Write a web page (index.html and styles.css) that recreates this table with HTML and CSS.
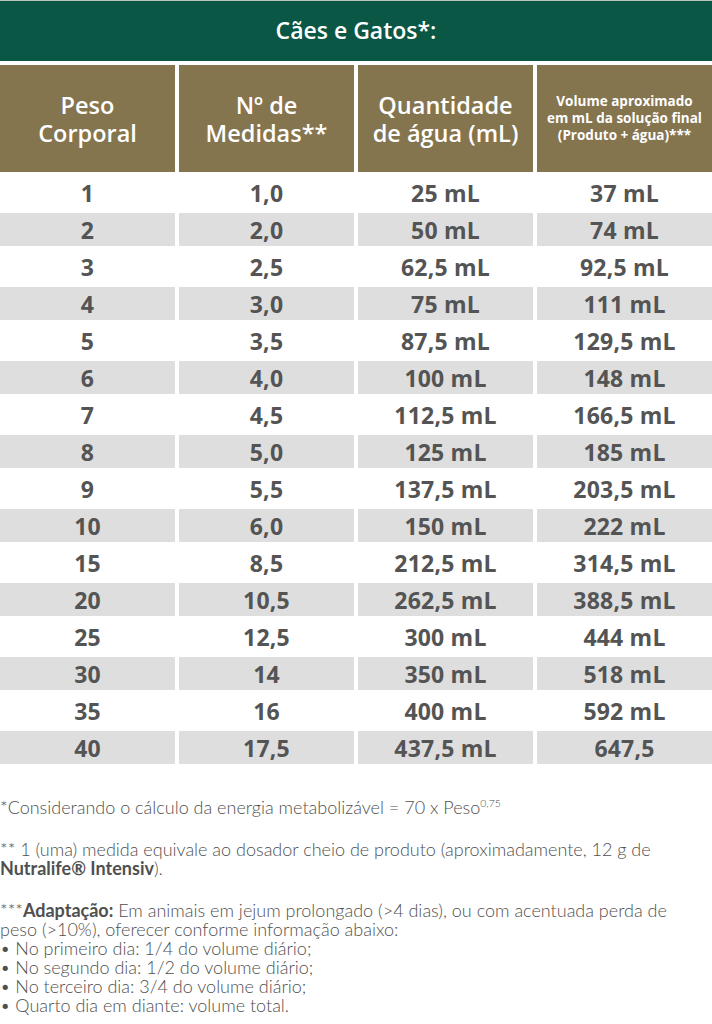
FILE: index.html
```
<!DOCTYPE html>
<html lang="pt-BR">
<head>
<meta charset="utf-8">
<title>Cães e Gatos</title>
<link rel="stylesheet" href="styles.css">
</head>
<body>
<div class="table">
  <div class="title">Cães e Gatos*:</div>
  <div class="th"><span class="ln">Peso</span><span class="ln">Corporal</span></div>
  <div class="th"><span class="ln">Nº de</span><span class="ln">Medidas**</span></div>
  <div class="th"><span class="ln">Quantidade</span><span class="ln">de água (mL)</span></div>
  <div class="th th-small"><span class="ln">Volume aproximado</span><span class="ln">em mL da solução final</span><span class="ln">(Produto + água)***</span></div>

  <div class="td">1</div><div class="td">1,0</div><div class="td">25 mL</div><div class="td">37 mL</div>
  <div class="td alt">2</div><div class="td alt">2,0</div><div class="td alt">50 mL</div><div class="td alt">74 mL</div>
  <div class="td">3</div><div class="td">2,5</div><div class="td">62,5 mL</div><div class="td">92,5 mL</div>
  <div class="td alt">4</div><div class="td alt">3,0</div><div class="td alt">75 mL</div><div class="td alt">111 mL</div>
  <div class="td">5</div><div class="td">3,5</div><div class="td">87,5 mL</div><div class="td">129,5 mL</div>
  <div class="td alt">6</div><div class="td alt">4,0</div><div class="td alt">100 mL</div><div class="td alt">148 mL</div>
  <div class="td">7</div><div class="td">4,5</div><div class="td">112,5 mL</div><div class="td">166,5 mL</div>
  <div class="td alt">8</div><div class="td alt">5,0</div><div class="td alt">125 mL</div><div class="td alt">185 mL</div>
  <div class="td">9</div><div class="td">5,5</div><div class="td">137,5 mL</div><div class="td">203,5 mL</div>
  <div class="td alt">10</div><div class="td alt">6,0</div><div class="td alt">150 mL</div><div class="td alt">222 mL</div>
  <div class="td">15</div><div class="td">8,5</div><div class="td">212,5 mL</div><div class="td">314,5 mL</div>
  <div class="td alt">20</div><div class="td alt">10,5</div><div class="td alt">262,5 mL</div><div class="td alt">388,5 mL</div>
  <div class="td">25</div><div class="td">12,5</div><div class="td">300 mL</div><div class="td">444 mL</div>
  <div class="td alt">30</div><div class="td alt">14</div><div class="td alt">350 mL</div><div class="td alt">518 mL</div>
  <div class="td">35</div><div class="td">16</div><div class="td">400 mL</div><div class="td">592 mL</div>
  <div class="td alt">40</div><div class="td alt">17,5</div><div class="td alt">437,5 mL</div><div class="td alt">647,5</div>
</div>

<div class="notes">
  <p class="note note-1">*Considerando o cálculo da energia metabolizável = 70 x Peso<sup>0,75</sup></p>
  <p class="note note-2">** 1 (uma) medida equivale ao dosador cheio de produto (aproximadamente, 12 g de<br><b>Nutralife® Intensiv</b>).</p>
  <p class="note note-3">***<b>Adaptação:</b> Em animais em jejum prolongado (&gt;4 dias), ou com acentuada perda de<br>peso (&gt;10%), oferecer conforme informação abaixo:<br>• No primeiro dia: 1/4 do volume diário;<br>• No segundo dia: 1/2 do volume diário;<br>• No terceiro dia: 3/4 do volume diário;<br>• Quarto dia em diante: volume total.</p>
</div>
</body>
</html>
```

FILE: styles.css
```
html, body {
  margin: 0;
  padding: 0;
  background: #ffffff;
}

body {
  width: 712px;
  font-family: "Open Sans", "Liberation Sans", sans-serif;
}

.table {
  display: grid;
  grid-template-columns: repeat(4, 1fr);
  column-gap: 4px;
  row-gap: 4px;
}

.title {
  grid-column: 1 / -1;
  height: 61px;
  border-top: 1px solid #b9c6c0;
  box-sizing: border-box;
  background: #0a5745;
  color: #ffffff;
  font-weight: 600;
  font-size: 23px;
  display: flex;
  align-items: center;
  justify-content: center;
  padding-bottom: 3px;
}

.th {
  height: 107px;
  background: #85754f;
  color: #ffffff;
  font-weight: 600;
  font-size: 23.5px;
  display: flex;
  flex-direction: column;
  align-items: center;
  justify-content: center;
  text-align: center;
}

.ln {
  display: block;
  height: 28px;
  line-height: 28px;
}

.th-small {
  font-size: 13.5px;
  font-weight: 700;
}

.th-small .ln {
  height: 17px;
  line-height: 17px;
}

.td {
  height: 33px;
  display: flex;
  align-items: center;
  justify-content: center;
  color: #545454;
  font-weight: 700;
  font-size: 23px;
  letter-spacing: 0.2px;
}

.alt {
  background: #dedede;
}

.notes {
  padding-top: 34px;
  color: #505050;
  font-family: Lato, "Open Sans", sans-serif;
  font-weight: 300;
  font-size: 18px;
  line-height: 19px;
}

.note {
  margin: 0;
}

.note b {
  font-weight: 700;
}

.note-2 {
  margin-top: 23px;
}

.note-3 {
  margin-top: 23px;
}

sup {
  font-size: 10.5px;
  line-height: 0;
  vertical-align: 7px;
}
```
